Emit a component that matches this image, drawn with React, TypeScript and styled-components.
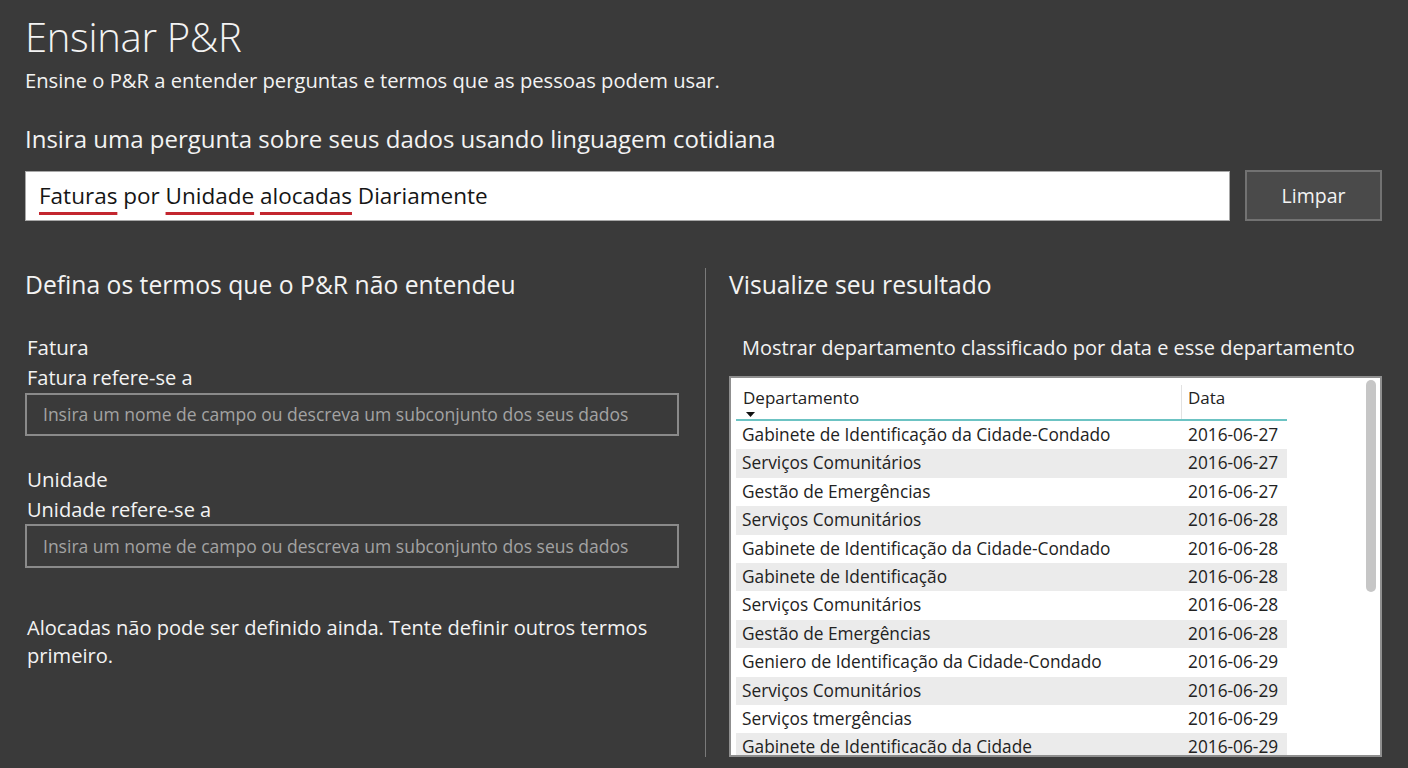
import React from 'react'
import styled, { createGlobalStyle } from 'styled-components'

const GlobalStyle = createGlobalStyle`
  html, body {
    margin: 0;
    background: #3a3a3a;
  }
  body {
    font-family: "Open Sans", "Noto Sans", Arial, sans-serif;
    color: #f3f3f3;
  }
`

const Page = styled.main`
  box-sizing: border-box;
  height: 768px;
  overflow: hidden;
  padding: 12.5px 26px 0 25px;
  display: flex;
  flex-direction: column;
`

const Title = styled.h1`
  margin: 0;
  font-size: 40px;
  font-weight: 300;
  line-height: 48px;
  letter-spacing: -0.3px;
`

const Subtitle = styled.p`
  margin: 5.5px 0 0;
  font-size: 20.2px;
  line-height: 28px;
`

const PromptLabel = styled.h2`
  margin: 30px 0 0;
  font-size: 24px;
  font-weight: 400;
  line-height: 30px;
`

const QueryRow = styled.div`
  display: flex;
  gap: 15px;
  height: 51px;
  margin-top: 16px;
`

const QueryBox = styled.div`
  flex: 1;
  box-sizing: border-box;
  margin-top: 1px;
  background: #fff;
  border: 1px solid #a8a8a8;
  display: flex;
  align-items: center;
  padding: 0 13px;
  color: #151515;
  font-size: 22.5px;
  line-height: 30px;
`

const QueryText = styled.span`
  white-space: pre;
`

const Unknown = styled.span`
  text-decoration: underline;
  text-decoration-color: #c3262f;
  text-decoration-thickness: 3px;
  text-underline-offset: 8px;
  text-decoration-skip-ink: none;
`

const ClearButton = styled.button`
  width: 137px;
  box-sizing: border-box;
  background: #4a4a4a;
  border: 2px solid #727272;
  color: #f3f3f3;
  font-family: inherit;
  font-size: 19.5px;
  padding: 0;
`

const Columns = styled.div`
  flex: 1;
  min-height: 0;
  margin-top: 47px;
  display: grid;
  grid-template-columns: 680px 1px 1fr;
`

const LeftColumn = styled.section`
  display: flex;
  flex-direction: column;
  padding-right: 26px;
`

const Divider = styled.div`
  background: #7a7a7a;
  margin-bottom: 11px;
`

const RightColumn = styled.section`
  display: flex;
  flex-direction: column;
  min-height: 0;
  padding-left: 23px;
`

const SectionHeading = styled.h3`
  margin: 0;
  font-size: 24.7px;
  font-weight: 400;
  line-height: 34px;
`

const TermLabel = styled.div<{ $gap: number }>`
  margin-top: ${p => p.$gap}px;
  padding-left: 2px;
  font-size: 20.5px;
  line-height: 28px;
`

const TermHint = styled.div`
  margin-top: 3px;
  padding-left: 2px;
  font-size: 20px;
  line-height: 28px;
`

const TermInput = styled.input`
  box-sizing: border-box;
  height: 43.5px;
  width: 100%;
  margin-top: 0.5px;
  background: transparent;
  border: 2px solid #8a8a8a;
  padding: 0 16px;
  color: #f3f3f3;
  font-family: inherit;
  font-size: 17.5px;
  line-height: 24px;
  outline: none;

  &::placeholder {
    color: #a3a3a3;
  }
`

const Note = styled.p`
  margin: 46px 0 0;
  padding-left: 2px;
  font-size: 20.1px;
  line-height: 28.5px;
`

const Caption = styled.p`
  margin: 32px 0 0;
  padding-left: 13px;
  font-size: 20px;
  line-height: 28px;
`

const TableBox = styled.div`
  flex: 1;
  min-height: 0;
  margin: 14px 0 11px;
  box-sizing: border-box;
  background: #fff;
  border: 2px solid #8f8f8f;
  display: flex;
  overflow: hidden;
`

const TableArea = styled.div`
  flex: 1;
  padding-left: 5px;
  color: #222;
  font-size: 17.3px;
`

const GridRow = styled.div<{ $alt?: boolean }>`
  display: grid;
  grid-template-columns: 445px 106px;
  width: 551px;
  height: 28.4px;
  line-height: 28.4px;
  background: ${p => (p.$alt ? '#ebebeb' : '#fff')};
  white-space: nowrap;
`

const HeaderRow = styled.div`
  display: grid;
  grid-template-columns: 445px 106px;
  width: 551px;
  height: 41px;
  border-bottom: 2px solid #6cc3c3;
  font-size: 17px;
  line-height: 24px;
`

const DeptHeader = styled.div`
  padding: 8.4px 0 0 7px;
  display: flex;
  flex-direction: column;
  align-items: flex-start;
`

const DataHeader = styled.div`
  margin-top: 7px;
  border-left: 1px solid #e2e2e2;
  padding: 1.4px 0 0 6px;
`

const SortArrow = styled.svg`
  margin: 1.5px 0 0 3px;
`

const Cell = styled.div<{ $date?: boolean }>`
  padding-left: ${p => (p.$date ? '7px' : '6px')};
  overflow: hidden;
`

const ScrollTrack = styled.div`
  width: 14px;
  padding-top: 2px;
`

const ScrollThumb = styled.div`
  width: 10px;
  height: 212px;
  border-radius: 5px;
  background: #c6c6c6;
`

const rows: [string, string][] = [
  ['Gabinete de Identificação da Cidade-Condado', '2016-06-27'],
  ['Serviços Comunitários', '2016-06-27'],
  ['Gestão de Emergências', '2016-06-27'],
  ['Serviços Comunitários', '2016-06-28'],
  ['Gabinete de Identificação da Cidade-Condado', '2016-06-28'],
  ['Gabinete de Identificação', '2016-06-28'],
  ['Serviços Comunitários', '2016-06-28'],
  ['Gestão de Emergências', '2016-06-28'],
  ['Geniero de Identificação da Cidade-Condado', '2016-06-29'],
  ['Serviços Comunitários', '2016-06-29'],
  ['Serviços tmergências', '2016-06-29'],
  ['Gabinete de Identificacão da Cidade', '2016-06-29'],
]

const terms = [
  { name: 'Fatura', gap: 31 },
  { name: 'Unidade', gap: 28.5 },
]

const App = () => {
  return (
    <Page>
      <GlobalStyle />
      <Title>Ensinar P&amp;R</Title>
      <Subtitle>Ensine o P&amp;R a entender perguntas e termos que as pessoas podem usar.</Subtitle>
      <PromptLabel>Insira uma pergunta sobre seus dados usando linguagem cotidiana</PromptLabel>
      <QueryRow>
        <QueryBox>
          <QueryText>
            <Unknown>Faturas</Unknown>{' por '}<Unknown>Unidade</Unknown>{' '}<Unknown>alocadas</Unknown>{' Diariamente'}
          </QueryText>
        </QueryBox>
        <ClearButton>Limpar</ClearButton>
      </QueryRow>

      <Columns>
        <LeftColumn>
          <SectionHeading>Defina os termos que o P&amp;R não entendeu</SectionHeading>
          {terms.map(t => (
            <React.Fragment key={t.name}>
              <TermLabel $gap={t.gap}>{t.name}</TermLabel>
              <TermHint>{t.name} refere-se a</TermHint>
              <TermInput placeholder="Insira um nome de campo ou descreva um subconjunto dos seus dados" />
            </React.Fragment>
          ))}
          <Note>Alocadas não pode ser definido ainda. Tente definir outros termos primeiro.</Note>
        </LeftColumn>

        <Divider />

        <RightColumn>
          <SectionHeading>Visualize seu resultado</SectionHeading>
          <Caption>Mostrar departamento classificado por data e esse departamento</Caption>
          <TableBox>
            <TableArea>
              <HeaderRow>
                <DeptHeader>
                  <span>Departamento</span>
                  <SortArrow width="9" height="5" viewBox="0 0 9 5">
                    <polygon points="0,0 9,0 4.5,5" fill="#111" />
                  </SortArrow>
                </DeptHeader>
                <DataHeader>Data</DataHeader>
              </HeaderRow>
              {rows.map(([dept, date], i) => (
                <GridRow key={i} $alt={i % 2 === 1}>
                  <Cell>{dept}</Cell>
                  <Cell $date>{date}</Cell>
                </GridRow>
              ))}
            </TableArea>
            <ScrollTrack>
              <ScrollThumb />
            </ScrollTrack>
          </TableBox>
        </RightColumn>
      </Columns>
    </Page>
  )
}

export default App
